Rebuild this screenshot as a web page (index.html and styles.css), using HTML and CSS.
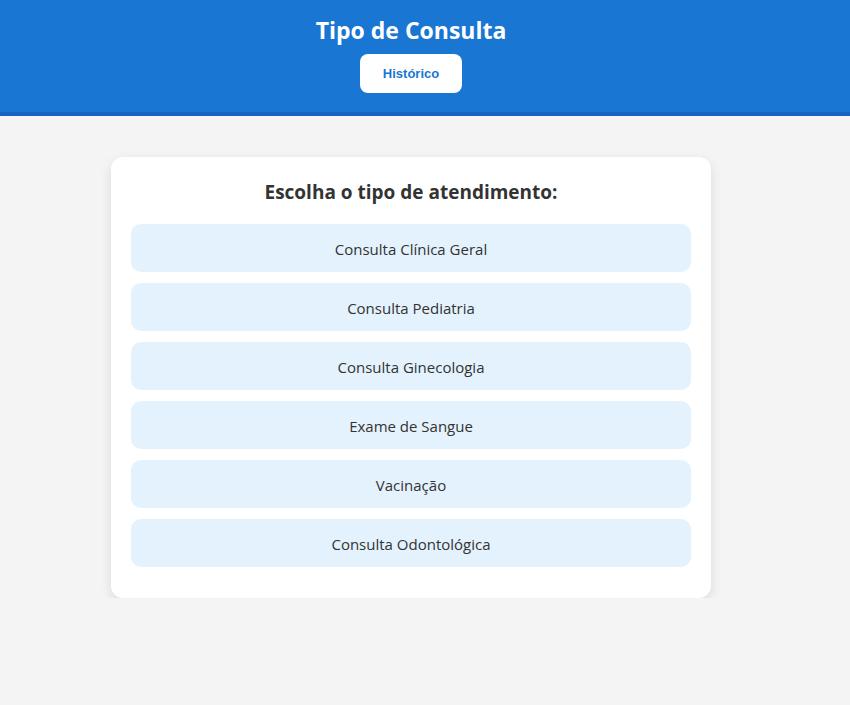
FILE: index.html
```html
<!DOCTYPE html>
<html lang="pt">
<head>
<meta charset="utf-8">
<title>Tipo de Consulta</title>
<link rel="stylesheet" href="styles.css">
</head>
<body>
<header class="topbar">
  <h1 class="topbar-title">Tipo de Consulta</h1>
  <button class="history-btn">Histórico</button>
</header>
<main class="content">
  <section class="card">
    <h2 class="card-title">Escolha o tipo de atendimento:</h2>
    <div class="options">
      <button class="option">Consulta Clínica Geral</button>
      <button class="option">Consulta Pediatria</button>
      <button class="option">Consulta Ginecologia</button>
      <button class="option">Exame de Sangue</button>
      <button class="option">Vacinação</button>
      <button class="option">Consulta Odontológica</button>
    </div>
  </section>
</main>
</body>
</html>
```
FILE: styles.css
```css
* { box-sizing: border-box; }
html, body { margin: 0; padding: 0; }
body {
  background: #f4f4f4;
  font-family: "Open Sans", "Noto Sans", sans-serif;
  color: #333;
}
.topbar {
  background: #1976d2;
  border-bottom: 4px solid #1565c0;
  height: 116px;
  display: flex;
  flex-direction: column;
  align-items: center;
  padding: 13px 28px 0 0;
}
.topbar-title {
  margin: 0;
  color: #fff;
  font-size: 23px;
  font-weight: 700;
  line-height: 34px;
}
.history-btn {
  margin-top: 7px;
  width: 102px;
  height: 39px;
  background: #fff;
  color: #1976d2;
  border: none;
  border-radius: 8px;
  font-family: "Liberation Sans", Arial, sans-serif;
  font-weight: 700;
  font-size: 13px;
}
.content {
  display: flex;
  justify-content: center;
  padding: 41px 28px 0 0;
}
.card {
  width: 600px;
  background: #fff;
  border-radius: 12px;
  box-shadow: 0 4px 12px rgba(0,0,0,0.1);
  padding: 20px 20px 31px;
}
.card-title {
  margin: 0 0 17px;
  text-align: center;
  font-size: 19px;
  font-weight: 700;
  line-height: 30px;
  color: #333;
}
.options {
  display: flex;
  flex-direction: column;
  gap: 11px;
}
.option {
  height: 48px;
  padding: 2px 0 0;
  background: #e3f2fd;
  border: none;
  border-radius: 10px;
  font-family: "Open Sans", "Noto Sans", sans-serif;
  font-size: 15px;
  color: #333;
}
```
